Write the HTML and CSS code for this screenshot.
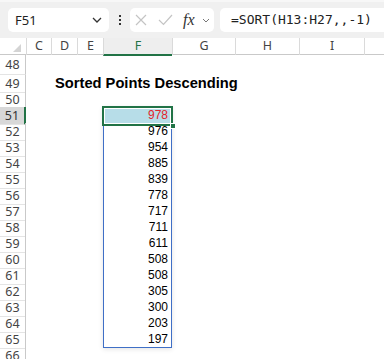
FILE: index.html
```html
<!DOCTYPE html>
<html lang="en">
<head>
  <meta charset="UTF-8">
  <title>Sorted Points</title>
  <link rel="stylesheet" href="styles.css">
</head>
<body>

  <div class="toolbar">
    <div class="namebox">
      <span>F51</span>
      <svg class="chev" width="10" height="6" viewBox="0 0 10 6"><path d="M1 1l4 4 4-4" fill="none" stroke="#333" stroke-width="1.3"/></svg>
    </div>
    <div class="dots"><i></i><i></i><i></i></div>
    <div class="fx-tools">
      <svg width="12" height="12" viewBox="0 0 12 12"><path d="M1 1l10 10M11 1L1 11" stroke="#c4c4c4" stroke-width="1.2"/></svg>
      <svg width="15" height="12" viewBox="0 0 15 12"><path d="M1 6l4.5 4.5L14 1" fill="none" stroke="#c4c4c4" stroke-width="1.2"/></svg>
      <span class="fx">fx</span>
      <svg width="8" height="5" viewBox="0 0 8 5"><path d="M1 1l3 3 3-3" fill="none" stroke="#777" stroke-width="1"/></svg>
    </div>
    <div class="formula">=SORT(H13:H27,,-1)</div>
  </div>

  <div class="sheet">
    <div class="row head">
      <div class="corner"><span class="tri"></span></div>
      <div class="col">C</div>
      <div class="col">D</div>
      <div class="col">E</div>
      <div class="col sel">F</div>
      <div class="col">G</div>
      <div class="col">H</div>
      <div class="col">I</div>
      <div class="col"></div>
    </div>

    <div class="row r48"><div class="rh">48</div></div>
    <div class="row"><div class="rh">49</div><div></div><div class="title">Sorted Points Descending</div></div>
    <div class="row"><div class="rh">50</div></div>
    <div class="row"><div class="rh cur">51</div><div></div><div></div><div></div><div class="num active">978<span class="handle"></span></div></div>
    <div class="row"><div class="rh">52</div><div></div><div></div><div></div><div class="num">976</div></div>
    <div class="row"><div class="rh">53</div><div></div><div></div><div></div><div class="num">954</div></div>
    <div class="row"><div class="rh">54</div><div></div><div></div><div></div><div class="num">885</div></div>
    <div class="row"><div class="rh">55</div><div></div><div></div><div></div><div class="num">839</div></div>
    <div class="row"><div class="rh">56</div><div></div><div></div><div></div><div class="num">778</div></div>
    <div class="row"><div class="rh">57</div><div></div><div></div><div></div><div class="num">717</div></div>
    <div class="row"><div class="rh">58</div><div></div><div></div><div></div><div class="num">711</div></div>
    <div class="row"><div class="rh">59</div><div></div><div></div><div></div><div class="num">611</div></div>
    <div class="row"><div class="rh">60</div><div></div><div></div><div></div><div class="num">508</div></div>
    <div class="row"><div class="rh">61</div><div></div><div></div><div></div><div class="num">508</div></div>
    <div class="row"><div class="rh">62</div><div></div><div></div><div></div><div class="num">305</div></div>
    <div class="row"><div class="rh">63</div><div></div><div></div><div></div><div class="num">300</div></div>
    <div class="row"><div class="rh">64</div><div></div><div></div><div></div><div class="num">203</div></div>
    <div class="row"><div class="rh">65</div><div></div><div></div><div></div><div class="num">197</div></div>
    <div class="row"><div class="rh">66</div></div>

    <!-- borde azul del rango desbordado -->
    <div class="spill"></div>
  </div>

</body>
</html>
```

FILE: styles.css
```css
body {
  margin: 0;
  width: 384px;
  height: 359px;
  overflow: hidden;
  background-color: #ffffff;
  font-family: "Liberation Sans", Arial, sans-serif;
}

.toolbar {
  display: flex;
  align-items: center;
  height: 38px;
  box-sizing: border-box;
  padding: 0 0 0 8px;
  background-color: #f0f0f0;
  border-top: 2px solid #f7f7f7;
}

.namebox {
  display: flex;
  align-items: center;
  justify-content: space-between;
  width: 101px;
  height: 24px;
  box-sizing: border-box;
  padding: 0 7px 0 7px;
  background-color: #ffffff;
  border-radius: 5px;
  font-family: "Noto Sans", sans-serif;
  font-size: 13px;
  color: #222;
}

.dots {
  display: flex;
  flex-direction: column;
  gap: 2px;
  margin: 0 9px 0 10px;
}

.dots i {
  width: 2px;
  height: 2px;
  background-color: #333;
}

.fx-tools {
  display: flex;
  align-items: center;
  width: 84px;
  height: 24px;
  box-sizing: border-box;
  padding: 0 0 0 5px;
  gap: 10px;
  background-color: #ffffff;
  border-radius: 5px;
}

.fx-tools svg:nth-child(2) {
  margin-left: 1px;
}

.fx {
  font-family: "Liberation Serif", serif;
  font-style: italic;
  font-size: 16px;
  color: #333;
  margin-left: 0;
  margin-right: -3px;
}

.formula {
  flex: 1;
  height: 24px;
  margin-left: 6px;
  padding-left: 11px;
  background-color: #ffffff;
  border-radius: 5px 0 0 5px;
  font-family: "DejaVu Sans Mono", monospace;
  font-size: 13px;
  line-height: 24px;
  color: #222;
  white-space: nowrap;
}

.sheet {
  position: relative;
}

.row {
  display: grid;
  grid-template-columns: 26px 25px 26px 26px 69px 63px 64px 65px 1fr;
  height: 16px;
  font-size: 12px;
}

.row.head {
  height: 17px;
  box-sizing: border-box;
  border-bottom: 1px solid #c9c9c9;
  font-family: "Noto Sans", sans-serif;
  font-size: 12.5px;
  color: #444;
}

.row.r48 {
  height: 20px;
}

.corner {
  position: relative;
}

.tri {
  position: absolute;
  right: 5px;
  bottom: 3px;
  width: 0;
  height: 0;
  border-left: 8px solid transparent;
  border-bottom: 8px solid #d4d4d4;
}

.col {
  border-left: 1px solid #dadada;
  text-align: center;
  line-height: 16px;
}

.col.sel {
  color: #217346;
  background-color: #eeeeee;
  border-bottom: 2px solid #217346;
  margin-bottom: -1px;
}

.rh {
  display: flex;
  align-items: center;
  justify-content: center;
  box-sizing: border-box;
  border-right: 1px solid #c9c9c9;
  border-bottom: 1px solid #e4e4e4;
  font-family: "Noto Sans", sans-serif;
  font-size: 12.5px;
  color: #444;
}

.rh.cur {
  background-color: #d8d8d8;
  border-right: 2px solid #217346;
  color: #333;
}

.title {
  padding-left: 4px;
  font-weight: bold;
  font-size: 14.7px;
  line-height: 16px;
  white-space: nowrap;
  color: #000;
}

.num {
  text-align: right;
  padding-right: 4px;
  line-height: 16px;
  color: #000;
}

.num.active {
  position: relative;
  z-index: 2;
  color: #e3242b;
  background-color: #b7dde8;
  outline: 2px solid #217346;
  outline-offset: -1px;
  box-shadow: inset 0 0 0 2px #ffffff;
}

.handle {
  position: absolute;
  right: -4px;
  bottom: -4px;
  width: 4px;
  height: 4px;
  background-color: #217346;
  border: 1px solid #ffffff;
}

.spill {
  position: absolute;
  left: 103px;
  top: 69px;
  width: 69px;
  height: 241px;
  box-sizing: border-box;
  border: 1px solid #3f6fc6;
  box-shadow: 0 1px 5px rgba(0, 0, 0, 0.12);
  z-index: 1;
}
```
